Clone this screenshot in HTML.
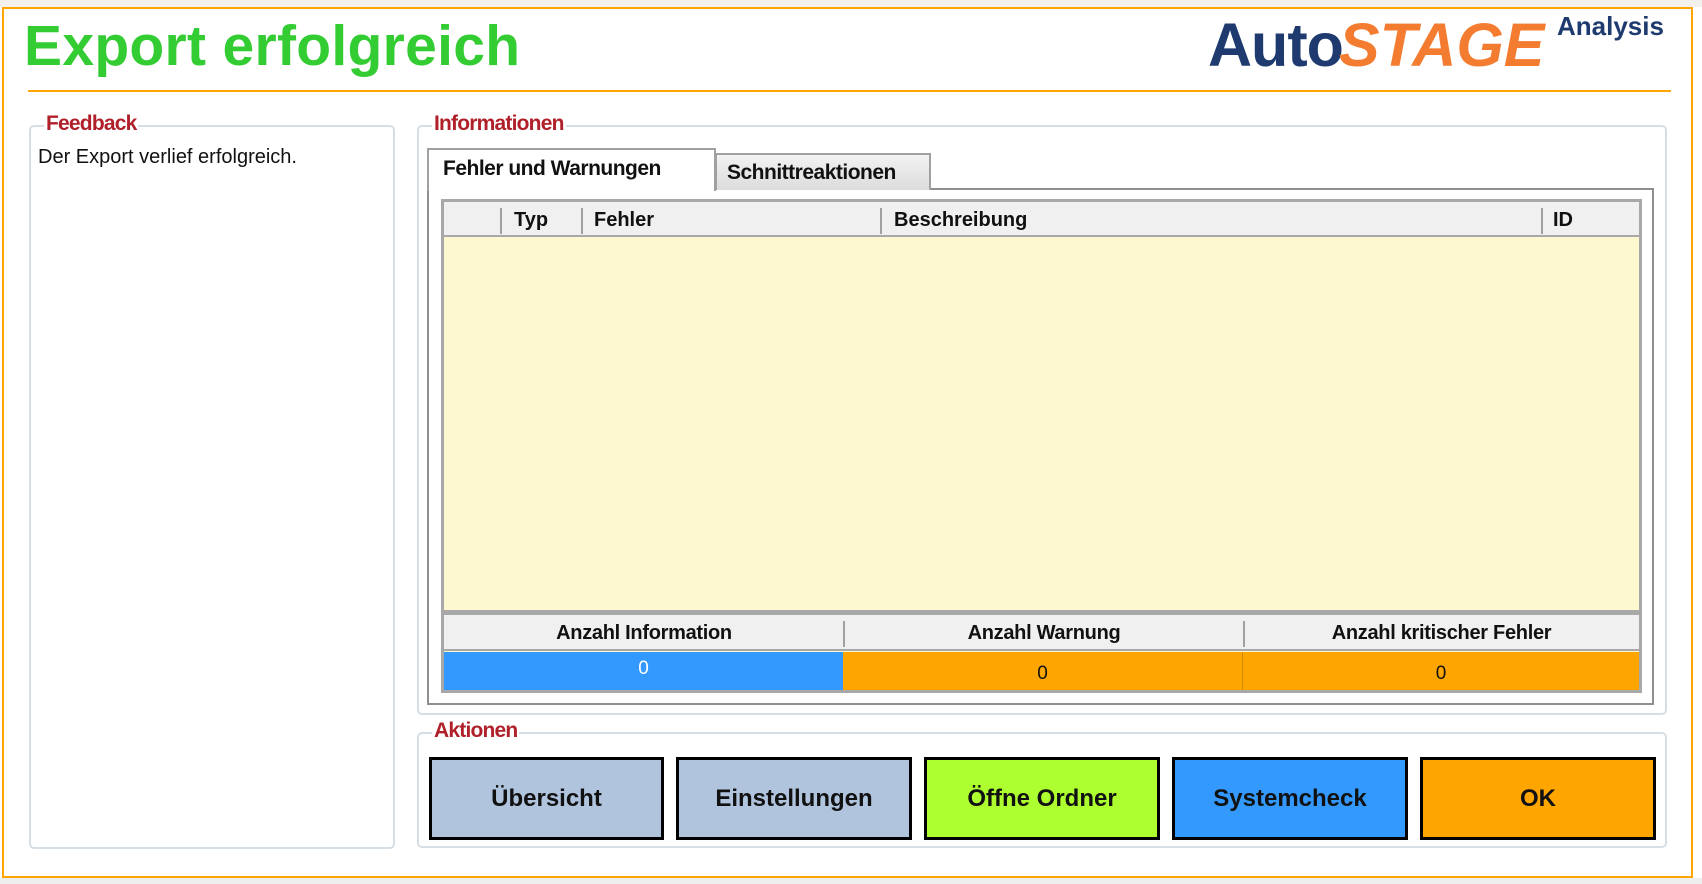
<!DOCTYPE html>
<html><head><meta charset="utf-8"><style>
*{margin:0;padding:0;box-sizing:border-box}
body{width:1702px;height:884px;background:#fff;position:relative;overflow:hidden;font-family:"Liberation Sans","DejaVu Sans",sans-serif}
.a{position:absolute}
.grp{position:absolute;border:2px solid #d5dfe5;border-radius:5px}
.lbl{position:absolute;background:#fff;color:#b0202a;font-size:21px;font-weight:bold;padding:0 2px;letter-spacing:-0.8px}
.btn{position:absolute;top:757px;height:83px;border:3px solid #000;display:flex;align-items:center;justify-content:center;font-weight:bold;font-size:24px;color:#111}
.hd{position:absolute;top:0;height:36px;font-size:20px;font-weight:bold;line-height:36px;color:#111}
.sep{position:absolute;top:6px;width:2px;height:26px;background:#a0a0a0}
</style></head><body>
<div class="a" style="left:0;top:0;width:1702px;height:7px;background:#f4f0ec"></div>
<div class="a" style="left:2px;top:7px;width:1691px;height:871px;border:2px solid #ffa500"></div>
<div class="a" style="left:0;top:878px;width:1702px;height:6px;background:#eee"></div>
<div class="a" style="left:24px;top:13px;font-size:57px;font-weight:bold;color:#33cc33;letter-spacing:0.3px">Export erfolgreich</div>
<div class="a" style="left:28px;top:90px;width:1643px;height:2px;background:#ffa500"></div>
<div class="a" style="left:1208px;top:10px;font-size:61px;font-weight:bold;font-style:italic;line-height:70px;white-space:nowrap;letter-spacing:0px"><span style="color:#1e3a6e;font-style:normal;letter-spacing:-1px">Auto</span><span style="color:#f47c30;margin-left:-4px">STAGE</span></div>
<div class="a" style="left:1557px;top:11px;font-size:26px;font-weight:bold;color:#1e3a6e">Analysis</div>

<div class="grp" style="left:29px;top:125px;width:366px;height:724px"></div>
<div class="lbl" style="left:44px;top:112px">Feedback</div>
<div class="a" style="left:38px;top:146px;font-size:20px;color:#111">Der Export verlief erfolgreich.</div>

<div class="grp" style="left:417px;top:125px;width:1250px;height:590px"></div>
<div class="lbl" style="left:432px;top:112px">Informationen</div>
<div class="a" style="left:427px;top:188px;width:1227px;height:517px;border:2px solid #8e8f91;background:#fff"></div>
<div class="a" style="left:715px;top:153px;width:216px;height:37px;border:2px solid #a0a0a0;border-bottom:none;background:linear-gradient(#f2f2f2,#dcdcdc);font-size:21px;font-weight:bold;color:#111;padding:6px 0 0 10px;letter-spacing:-0.5px">Schnittreaktionen</div>
<div class="a" style="left:427px;top:148px;width:289px;height:43px;border:2px solid #a0a0a0;border-bottom:none;background:#fff;font-size:21px;font-weight:bold;color:#111;padding:7px 0 0 14px;letter-spacing:-0.5px">Fehler und Warnungen</div>

<div class="a" style="left:441px;top:199px;width:1201px;height:494px;border:3px solid #a8a8a8;background:#fdf8cf"></div>
<div class="a" style="left:444px;top:202px;width:1195px;height:35px;background:#f0f0f0;border-bottom:2px solid #a8a8a8">
 <div class="sep" style="left:56px"></div><div class="hd" style="left:70px">Typ</div>
 <div class="sep" style="left:137px"></div><div class="hd" style="left:150px">Fehler</div>
 <div class="sep" style="left:436px"></div><div class="hd" style="left:450px">Beschreibung</div>
 <div class="sep" style="left:1097px"></div><div class="hd" style="left:1109px">ID</div>
</div>
<div class="a" style="left:441px;top:610px;width:1201px;height:5px;background:#a8a8a8"></div>
<div class="a" style="left:444px;top:615px;width:1195px;height:36px;background:#f0f0f0;border-bottom:2px solid #a8a8a8">
 <div class="hd" style="left:0;width:400px;text-align:center;letter-spacing:-0.3px">Anzahl Information</div>
 <div class="sep" style="left:399px"></div>
 <div class="hd" style="left:400px;width:400px;text-align:center;letter-spacing:-0.3px">Anzahl Warnung</div>
 <div class="sep" style="left:799px"></div>
 <div class="hd" style="left:800px;width:395px;text-align:center;letter-spacing:-0.3px">Anzahl kritischer Fehler</div>
</div>
<div class="a" style="left:444px;top:652px;width:399px;height:38px;background:#3399ff;color:#fff;font-size:19px;text-align:center;line-height:34px">0</div>
<div class="a" style="left:843px;top:652px;width:400px;height:38px;background:#ffa500;color:#111;font-size:19px;text-align:center;line-height:44px;border-right:1px solid #d08a00">0</div>
<div class="a" style="left:1243px;top:652px;width:396px;height:38px;background:#ffa500;color:#111;font-size:19px;text-align:center;line-height:44px">0</div>

<div class="grp" style="left:417px;top:732px;width:1250px;height:116px"></div>
<div class="lbl" style="left:432px;top:719px">Aktionen</div>
<div class="btn" style="left:429px;width:235px;background:#b0c4de">Übersicht</div>
<div class="btn" style="left:676px;width:236px;background:#b0c4de">Einstellungen</div>
<div class="btn" style="left:924px;width:236px;background:#adff2f">Öffne Ordner</div>
<div class="btn" style="left:1172px;width:236px;background:#3399ff">Systemcheck</div>
<div class="btn" style="left:1420px;width:236px;background:#ffa500">OK</div>
</body></html>
